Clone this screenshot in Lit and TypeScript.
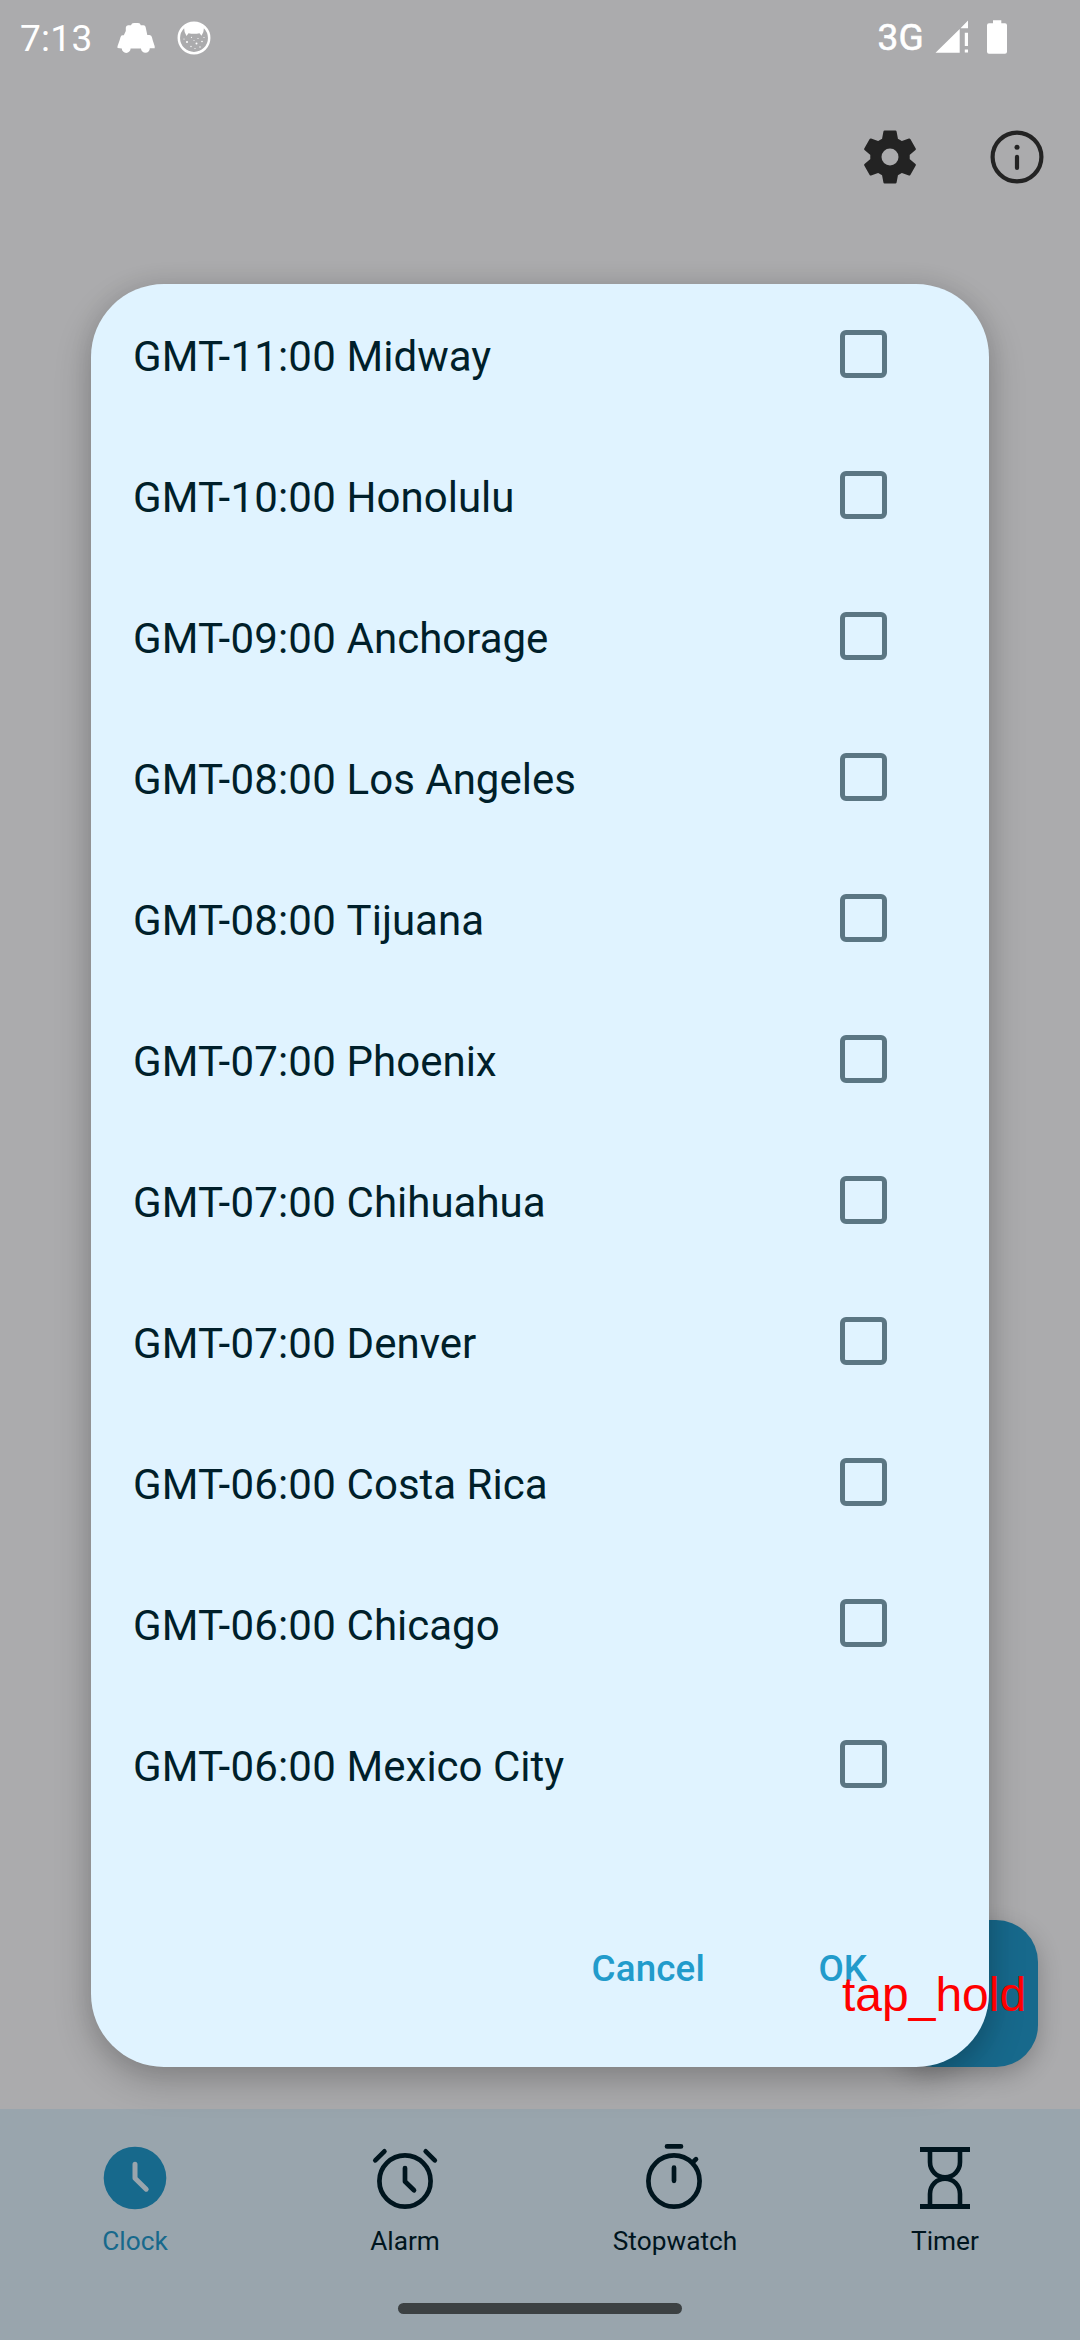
import { LitElement, html, css, svg } from "lit";
import { customElement, property } from "lit/decorators.js";

const ZONES: [string, string][] = [
  ["GMT-11:00", "Midway"],
  ["GMT-10:00", "Honolulu"],
  ["GMT-09:00", "Anchorage"],
  ["GMT-08:00", "Los Angeles"],
  ["GMT-08:00", "Tijuana"],
  ["GMT-07:00", "Phoenix"],
  ["GMT-07:00", "Chihuahua"],
  ["GMT-07:00", "Denver"],
  ["GMT-06:00", "Costa Rica"],
  ["GMT-06:00", "Chicago"],
  ["GMT-06:00", "Mexico City"],
];

// One gear tooth every 60 degrees, as corner points around the centre.
function gearPoints(): string {
  const tooth = [[-6.9, -17.4], [-5.4, -25.4], [5.4, -25.4], [6.9, -17.4]];
  const out: string[] = [];
  for (let i = 0; i < 6; i++) {
    const a = (i * Math.PI) / 3;
    for (const [x, y] of tooth) {
      out.push(
        `${(x * Math.cos(a) - y * Math.sin(a)).toFixed(2)},${(x * Math.sin(a) + y * Math.cos(a)).toFixed(2)}`
      );
    }
  }
  return out.join(" ");
}

const NAV_ICONS: Record<string, unknown> = {
  Clock: svg`
    <circle cx="36" cy="36" r="31.3" fill="currentColor"/>
    <path d="M36 22.3V36.3L47.2 47.2" fill="none" stroke="#99a5ad" stroke-width="5" stroke-linecap="round" stroke-linejoin="round"/>`,
  Alarm: svg`
    <g fill="none" stroke="currentColor" stroke-width="4.7" stroke-linecap="round">
      <circle cx="36" cy="39" r="25.6"/>
      <path d="M36 26V39.5L45 48.3M6.3 18.3L15.4 9.3M56.7 9.3L65.8 18.3" stroke-linejoin="round"/>
    </g>`,
  Stopwatch: svg`
    <g fill="none" stroke="currentColor" stroke-width="4.7" stroke-linecap="round">
      <circle cx="35" cy="39" r="25.6"/>
      <path d="M28 4.4H42M35 25.7V38.8M54 20.2L57 17.2"/>
    </g>`,
  Timer: svg`
    <g fill="none" stroke="currentColor" stroke-width="4.6">
      <path d="M11 7.5H61M11 64.5H61" stroke-width="4.8"/>
      <path d="M21 8V20C21 28.5 27.5 35.2 36 35.2S51 28.5 51 20V8M21 64V52C21 43.5 27.5 36.8 36 36.8S51 43.5 51 52V64"/>
    </g>`,
};

@customElement("nav-item")
class NavItem extends LitElement {
  @property() label = "";
  @property({ type: Boolean, reflect: true }) active = false;
  static styles = css`
    :host {
      flex: 1;
      display: flex;
      flex-direction: column;
      align-items: center;
      padding-top: 33px;
      color: #00151e;
    }
    :host([active]) { color: #17698c; }
    .icon { display: block; width: 72px; height: 72px; overflow: visible; }
    .label {
      margin-top: 9px;
      font-size: 26.25px;
      line-height: 36px;
    }
  `;
  render() {
    return html`
      <svg class="icon" viewBox="0 0 72 72">${NAV_ICONS[this.label]}</svg>
      <span class="label">${this.label}</span>`;
  }
}

@customElement("zone-row")
class ZoneRow extends LitElement {
  @property() offset = "";
  @property() city = "";
  static styles = css`
    :host {
      display: flex;
      align-items: center;
      justify-content: space-between;
      height: 141px;
      padding: 0 102px 0 42px;
    }
    .name {
      padding-top: 5px;
      font-size: 42px;
      line-height: 50px;
      color: #001f2a;
      white-space: nowrap;
    }
    .offset { letter-spacing: 0.2px; }
    .box {
      box-sizing: border-box;
      width: 47.5px;
      height: 47.5px;
      margin-bottom: 1px;
      border: 5px solid #5b7683;
      border-radius: 6px;
    }
  `;
  render() {
    return html`<span class="name"><span class="offset">${this.offset} </span>${this.city}</span><span class="box"></span>`;
  }
}

@customElement("app-root")
class AppRoot extends LitElement {
  static styles = css`
    :host {
      display: flex;
      flex-direction: column;
      position: relative;
      width: 1080px;
      height: 2340px;
      overflow: hidden;
      background: #ababad;
      font-family: Roboto, "Liberation Sans", sans-serif;
    }
    .status {
      display: flex;
      justify-content: space-between;
      height: 76px;
      color: #fff;
    }
    .side { display: flex; align-items: center; }
    .left { padding-left: 20px; }
    .right { padding-right: 72px; }
    .time { font-size: 37px; line-height: 44px; padding-top: 2px; letter-spacing: 0.3px; }
    .net {
      font-size: 37px;
      line-height: 44px;
      font-weight: 400;
      letter-spacing: 0.2px;
      -webkit-text-stroke: 0.6px #fff;
    }
    .car { width: 40px; height: 36px; margin-left: 23px; }
    .cat { width: 36px; height: 36px; margin-left: 20px; }
    .signal { width: 34px; height: 36px; margin-left: 11px; }
    .battery { width: 22px; height: 36px; margin-left: 17px; }
    .toolbar {
      display: flex;
      justify-content: flex-end;
      gap: 67px;
      padding: 50.5px 33.5px 0 0;
    }
    .tool { width: 60px; height: 60px; color: #232323; }
    .nav {
      display: flex;
      flex-direction: column;
      margin-top: auto;
      height: 231px;
      background: #99a5ad;
    }
    .tabs { display: flex; height: 194px; }
    .pill {
      align-self: center;
      width: 284px;
      height: 11px;
      border-radius: 6px;
      background: #3c4143;
    }
    .fab {
      position: absolute;
      left: 891px;
      top: 1920px;
      width: 147px;
      height: 147px;
      border-radius: 42px;
      background: #17698c;
      box-shadow: 0 8px 24px rgba(0, 0, 0, 0.24);
    }
    .dialog {
      position: absolute;
      left: 91px;
      top: 284px;
      width: 898px;
      height: 1783px;
      border-radius: 73px;
      display: flex;
      flex-direction: column;
      background: #e0f3ff;
      box-shadow: 0 14px 36px rgba(0, 0, 0, 0.22), 0 0 24px rgba(0, 0, 0, 0.08);
    }
    .actions {
      display: flex;
      justify-content: flex-end;
      gap: 113.5px;
      padding: 112px 122px 0 0;
      font-size: 36.75px;
      line-height: 44px;
      font-weight: 500;
      color: #229bcb;
    }
    .cancel { letter-spacing: 0.15px; }
    .note {
      position: absolute;
      left: 842px;
      top: 1968px;
      font: 48px/54px "Liberation Sans", Arial, sans-serif;
      color: #f00;
    }
  `;

  render() {
    return html`
      <div class="status">
        <div class="side left">
          <span class="time">7:13</span>
          <svg class="car" viewBox="116 20 40 36" fill="#fff">
            <path d="M131 25.3Q131.5 23 134 23H138Q140.3 23 140.8 25.3H143.5Q145.3 25.5 145.6 27L147.3 35H149.5Q151.7 35.2 152 37.5L152.8 40.5L154.7 46.3V48.3H149.8A4.4 4.4 0 0 1 141 48.5H130.6A4.4 4.4 0 0 1 121.8 48.5L117.5 48V46.3L119.7 40L120.4 37.5Q120.8 35.3 122.5 35.3H123.8L125.8 31V27.5Q126 25.5 128 25.3Z"/>
          </svg>
          <svg class="cat" viewBox="176 20 36 36">
            <circle cx="194" cy="38" r="15.2" fill="none" stroke="#fff" stroke-width="2.5"/>
            <path d="M184 27.5Q188 22.8 194 22.8T204 27.5Q204 32 201.5 35.8L199.5 33.2Q194 34.2 188.5 33.2L186.5 36Q184 32 184 27.5Z" fill="#fff"/>
            <g fill="#fff">
              <circle cx="187" cy="42" r="1"/><circle cx="191.5" cy="37.3" r=".6"/>
              <circle cx="196.5" cy="43.5" r="1"/><circle cx="191" cy="46.5" r=".7"/>
              <circle cx="202" cy="41.5" r=".8"/><circle cx="200" cy="47" r=".7"/>
              <circle cx="198" cy="38.5" r=".6"/><circle cx="194" cy="40.5" r=".5"/>
              <circle cx="184" cy="39" r=".6"/><circle cx="204" cy="37.5" r=".6"/>
              <circle cx="195" cy="48.5" r=".6"/>
            </g>
          </svg>
        </div>
        <div class="side right">
          <span class="net">3G</span>
          <svg class="signal" viewBox="934 20 34 36" fill="#fff">
            <path d="M934.5 52.8L958.7 29V52.8ZM959.5 28.3L967 20.5V28.3ZM963.8 32.7H967V46H963.8ZM963.8 49.5H967V52.6H963.8Z"/>
          </svg>
          <svg class="battery" viewBox="985 20 22 36" fill="#fff">
            <path d="M992 23.3V20.3H1000.3V23.3H1004Q1006 23.3 1006 25.3V51.7Q1006 53.7 1004 53.7H988Q986 53.7 986 51.7V25.3Q986 23.3 988 23.3Z"/>
          </svg>
        </div>
      </div>

      <div class="toolbar">
        <svg class="tool" viewBox="-30 -30 60 60">
          <polygon points=${gearPoints()} fill="currentColor" stroke="currentColor" stroke-width="2.4" stroke-linejoin="round"/>
          <circle r="8.5" fill="#ababad"/>
        </svg>
        <svg class="tool" viewBox="-30 -30 60 60">
          <circle r="24.4" fill="none" stroke="currentColor" stroke-width="4.2"/>
          <circle cy="-9.8" r="2.5" fill="currentColor"/>
          <path d="M0 -0.2V11" stroke="currentColor" stroke-width="4.2" stroke-linecap="round"/>
        </svg>
      </div>

      <div class="fab"></div>

      <div class="nav">
        <div class="tabs">
          <nav-item label="Clock" active></nav-item>
          <nav-item label="Alarm"></nav-item>
          <nav-item label="Stopwatch"></nav-item>
          <nav-item label="Timer"></nav-item>
        </div>
        <div class="pill"></div>
      </div>

      <div class="dialog">
        ${ZONES.map(([offset, city]) => html`<zone-row offset=${offset} city=${city}></zone-row>`)}
        <div class="actions"><span class="cancel">Cancel</span><span>OK</span></div>
      </div>

      <div class="note">tap_hold</div>
    `;
  }
}
